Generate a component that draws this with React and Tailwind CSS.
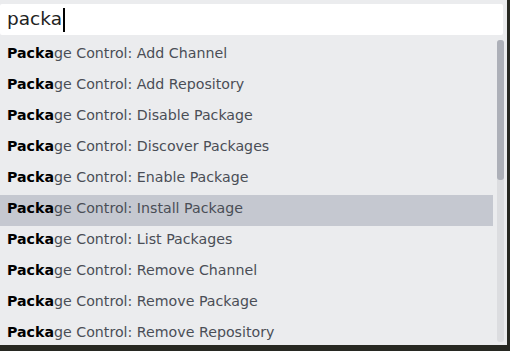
import React from "react";

const items = [
  "Add Channel",
  "Add Repository",
  "Disable Package",
  "Discover Packages",
  "Enable Package",
  "Install Package",
  "List Packages",
  "Remove Channel",
  "Remove Package",
  "Remove Repository",
];

export default function App() {
  return (
    <div className="w-[510px] h-[351px] bg-[#272822] overflow-hidden" style={{ fontFamily: '"DejaVu Sans", sans-serif' }}>
      <div className="w-[507px] h-[345px] bg-[#ebecee] flex flex-col">
        <div className="pt-[4px] pr-[4px]">
          <div className="h-[31px] bg-white rounded-[2px] flex items-center pl-[7px]">
            <span className="text-[18.5px] text-[#222] leading-none">packa</span>
            <span className="w-[2px] h-[24px] bg-black ml-[1px]" />
          </div>
        </div>
        <div className="flex mt-[5px]">
          <div className="flex-1 flex flex-col">
            {items.map((t, i) => (
              <div
                key={t}
                className={`h-[31px] flex items-center pl-[7px] pb-[3px] text-[14.2px] text-[#4a4e56] ${i === 5 ? "bg-[#c5c8d0]" : ""}`}
              >
                <span className="font-bold text-black">Packa</span>
                <span>ge Control: {t}</span>
              </div>
            ))}
          </div>
          <div className="w-[14px] flex justify-center pl-[4px] pr-[3px]">
            <div className="w-[7px] h-[302px] rounded-[3px] bg-[#dcdde0]">
              <div className="h-[140px] rounded-[3px] bg-[#adb0b8]" />
            </div>
          </div>
        </div>
      </div>
    </div>
  );
}
